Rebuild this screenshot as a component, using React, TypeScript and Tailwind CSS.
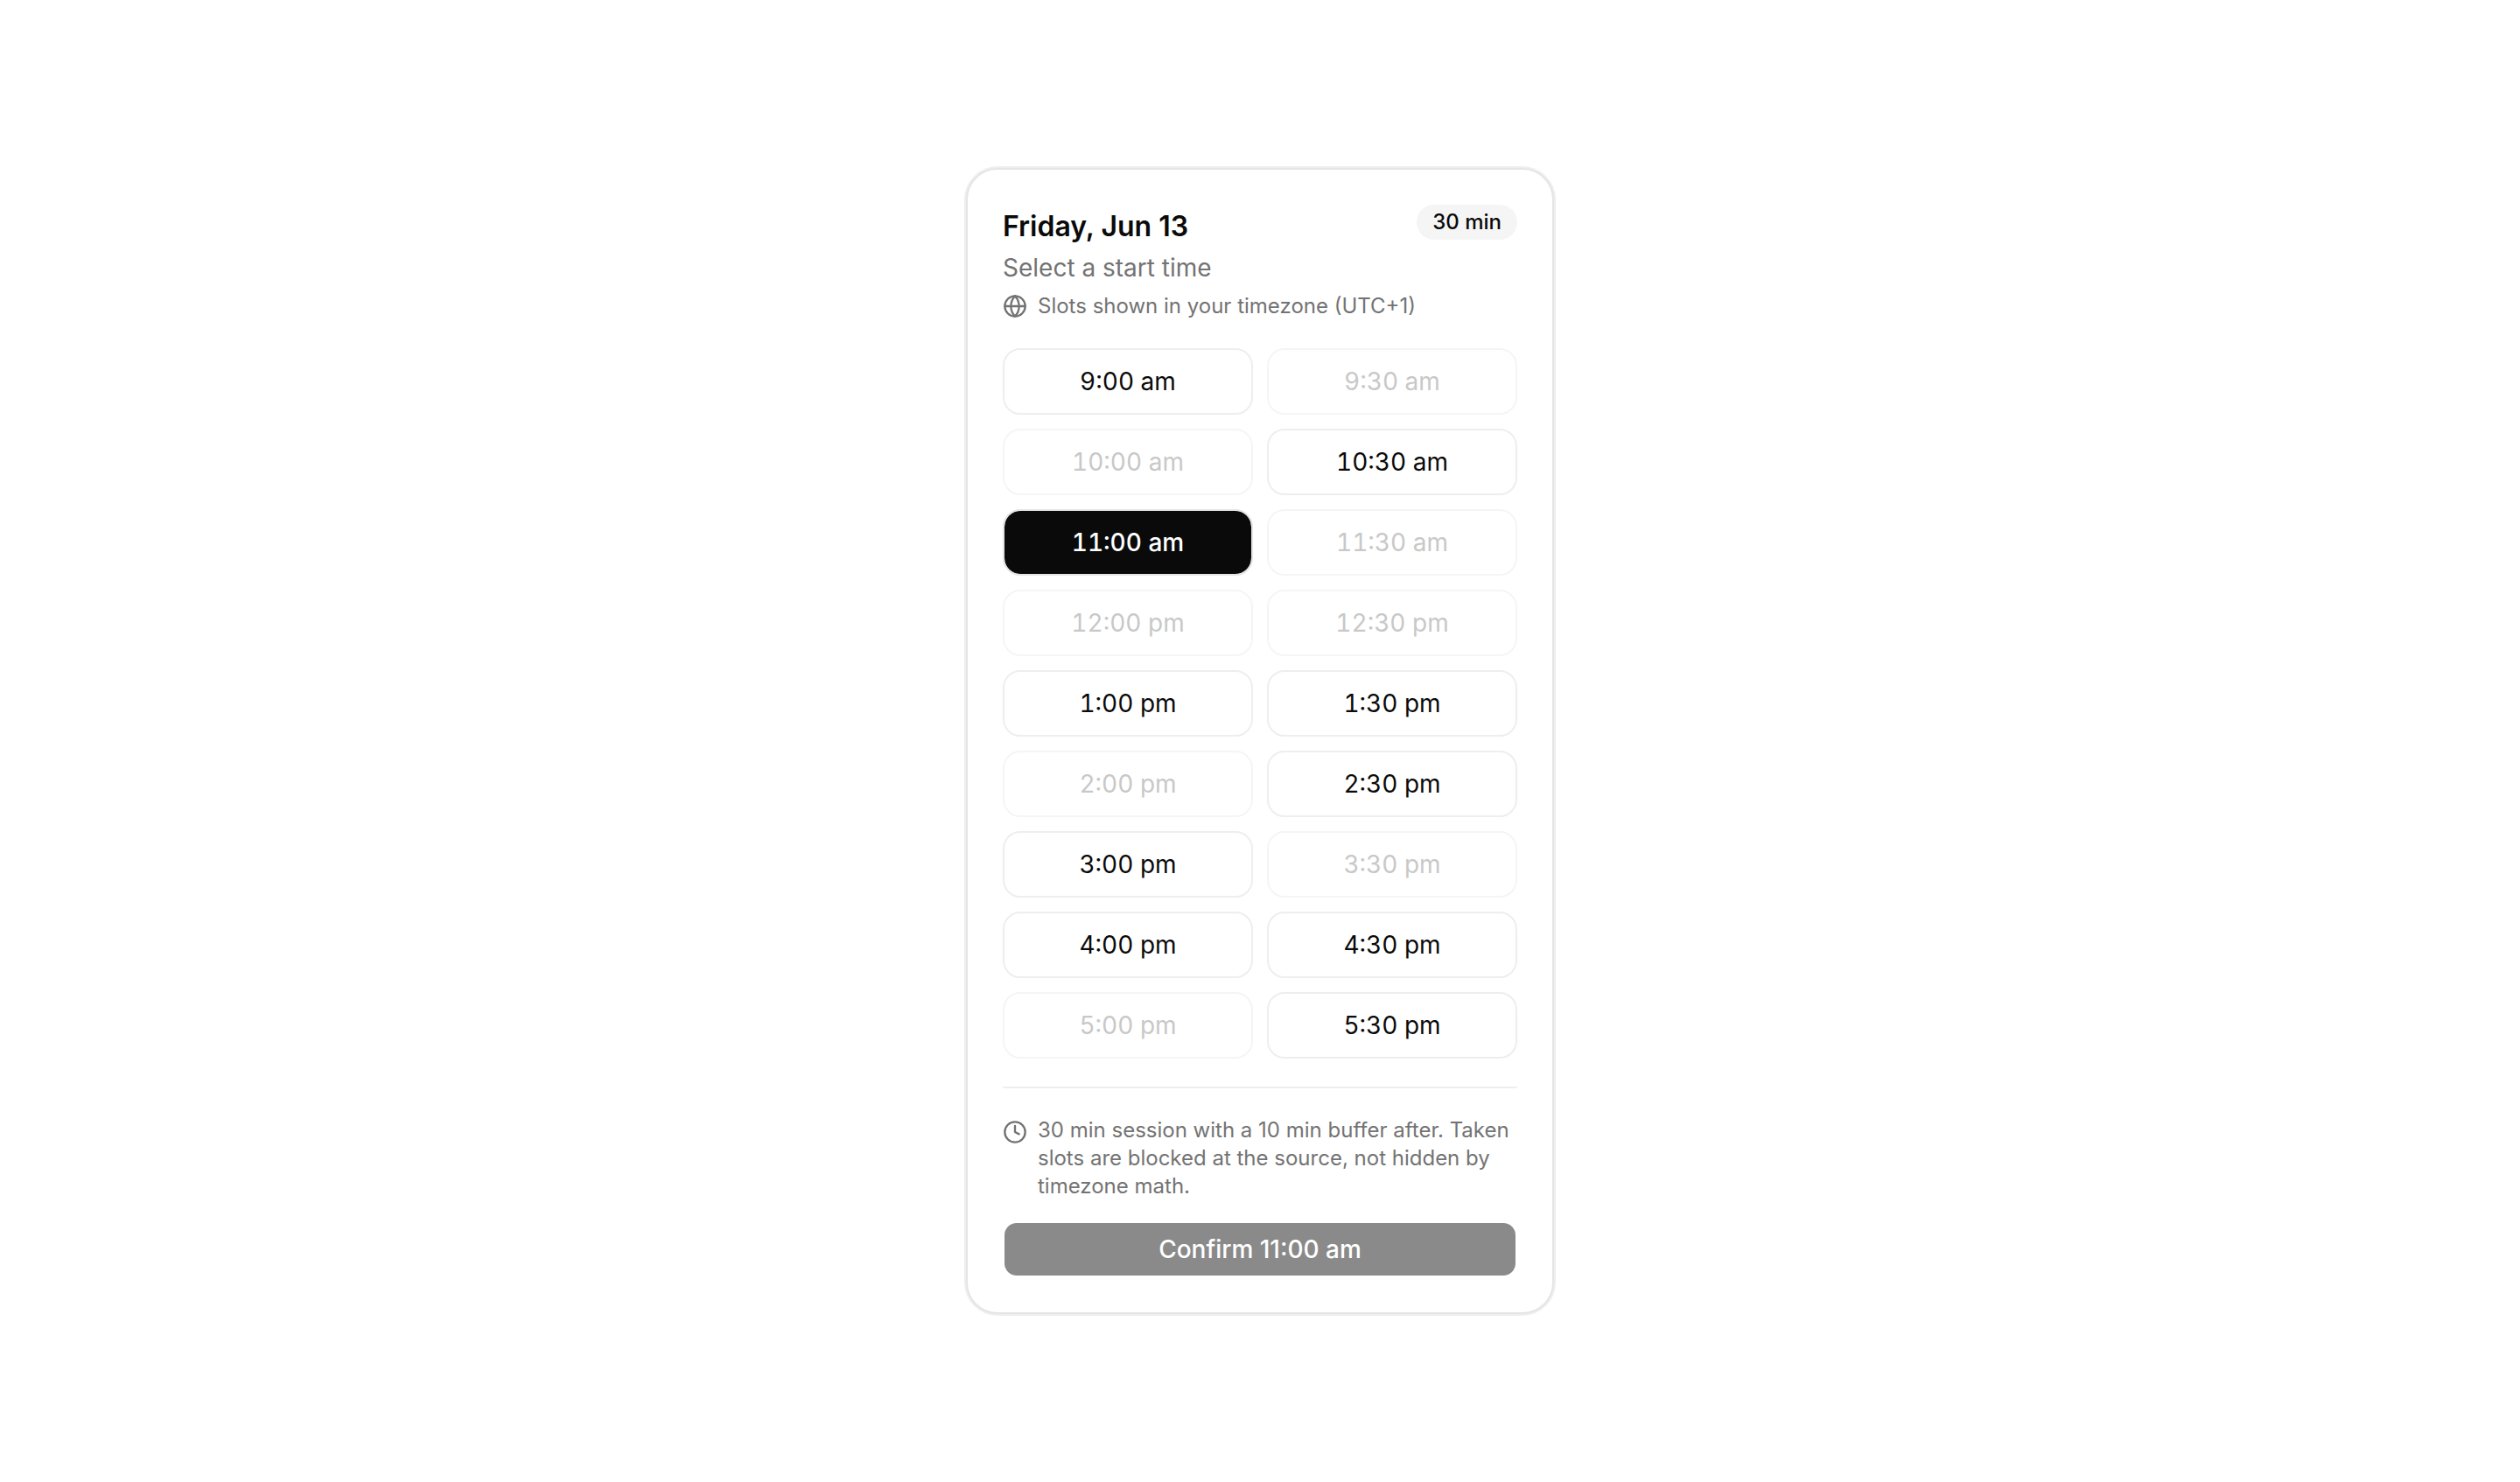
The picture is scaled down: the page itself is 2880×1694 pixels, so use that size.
import { useState } from "react";
import { Clock, Globe } from "lucide-react";
import clsx from "clsx";

const slots = [
  { time: "9:00 am", taken: false },
  { time: "9:30 am", taken: true },
  { time: "10:00 am", taken: true },
  { time: "10:30 am", taken: false },
  { time: "11:00 am", taken: false },
  { time: "11:30 am", taken: true },
  { time: "12:00 pm", taken: true },
  { time: "12:30 pm", taken: true },
  { time: "1:00 pm", taken: false },
  { time: "1:30 pm", taken: false },
  { time: "2:00 pm", taken: true },
  { time: "2:30 pm", taken: false },
  { time: "3:00 pm", taken: false },
  { time: "3:30 pm", taken: true },
  { time: "4:00 pm", taken: false },
  { time: "4:30 pm", taken: false },
  { time: "5:00 pm", taken: true },
  { time: "5:30 pm", taken: false },
];

const App = () => {
  const [selected, setSelected] = useState("11:00 am");

  return (
    <main className="flex min-h-screen items-center justify-center bg-white font-['Inter',sans-serif] text-[#0a0a0a]">
      <section className="w-full max-w-2xl rounded-[36px] border-2 border-[#e5e5e5] bg-white p-10 ring-2 ring-[#eeeeee]">
        <header>
          <div className="flex items-start justify-between">
            <div>
              <h1 className="text-[32px] leading-[50px] font-semibold">Friday, Jun 13</h1>
              <p className="mt-0.5 text-[28px] leading-10 text-[#737373]">Select a start time</p>
            </div>
            <span className="flex h-10 items-center rounded-full bg-[#f5f5f5] px-[18px] text-2xl font-medium whitespace-nowrap">
              30 min
            </span>
          </div>
          <p className="mt-2 flex items-center gap-3 text-2xl text-[#737373]">
            <Globe className="size-7 shrink-0" />
            Slots shown in your timezone (UTC+1)
          </p>
        </header>

        <div className="mt-8 grid grid-cols-2 gap-4">
          {slots.map((slot) => (
            <button
              key={slot.time}
              type="button"
              disabled={slot.taken}
              aria-pressed={slot.time === selected}
              onClick={() => setSelected(slot.time)}
              className={clsx(
                "h-[76px] rounded-[20px] border-2 bg-clip-padding text-[28px] leading-10 tabular-nums",
                slot.time === selected && "border-[#e5e5e5] bg-[#0a0a0a] font-medium text-white",
                slot.time !== selected && !slot.taken && "border-[#eeeeee]",
                slot.taken && "border-[#f5f5f5] text-[#c8c8c8]"
              )}
            >
              {slot.time}
            </button>
          ))}
        </div>

        <footer className="mt-8 border-t-2 border-[#eeeeee] pt-8">
          <div className="flex items-start gap-3 text-2xl text-[#737373]">
            <Clock className="mt-1 size-7 shrink-0" />
            <p>
              30 min session with a 10 min buffer after. Taken slots are blocked at the source, not hidden by
              timezone math.
            </p>
          </div>
          <button
            type="button"
            disabled
            className="mt-6 h-16 w-full rounded-2xl border-2 border-transparent bg-[#8a8a8a] bg-clip-padding text-[28px] leading-10 font-medium text-white"
          >
            Confirm {selected}
          </button>
        </footer>
      </section>
    </main>
  );
};

export default App;
